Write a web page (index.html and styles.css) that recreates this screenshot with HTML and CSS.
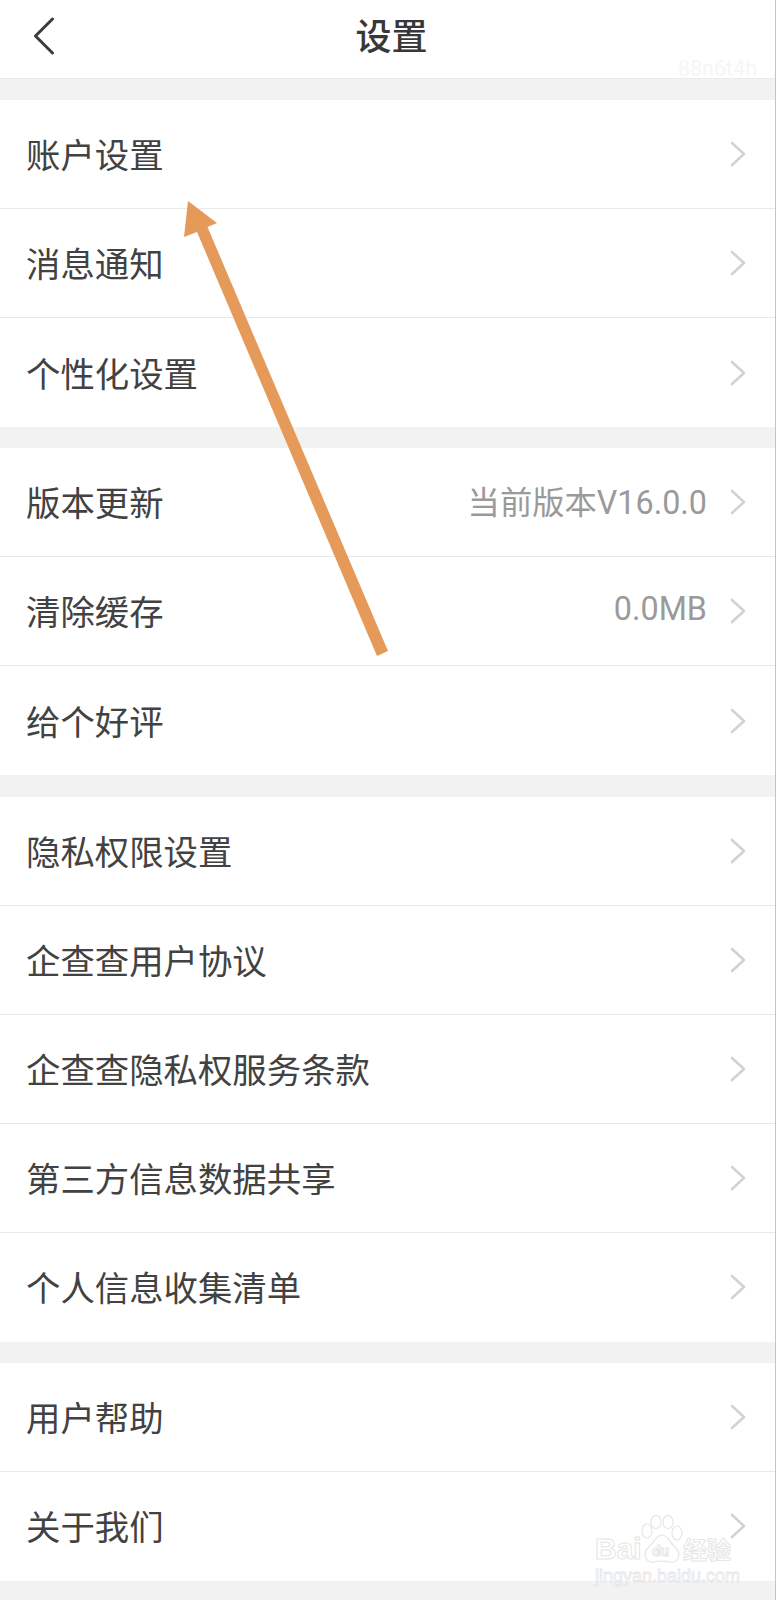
FILE: index.html
```html
<!DOCTYPE html>
<html lang="zh-CN">
<head>
    <meta charset="UTF-8">
    <meta name="viewport" content="width=device-width, initial-scale=1.0">
    <title>设置</title>
    <link rel="stylesheet" href="styles.css">
</head>
<body>
    <div class="page">
        <header class="topbar">
            <svg class="back" width="22" height="38" viewBox="0 0 22 38">
                <path d="M19.5 2 L2.5 19 L19.5 36" fill="none" stroke="#3c3c3c" stroke-width="3" stroke-linecap="round" stroke-linejoin="round"/>
            </svg>
            <h1>设置</h1>
            <span class="mark">88n6t4h</span>
        </header>

        <section class="group">
            <div class="row"><span>账户设置</span><svg class="chev" width="16" height="26" viewBox="0 0 16 26"><path d="M2 2 L14 13 L2 24"/></svg></div>
            <div class="row"><span>消息通知</span><svg class="chev" width="16" height="26" viewBox="0 0 16 26"><path d="M2 2 L14 13 L2 24"/></svg></div>
            <div class="row"><span>个性化设置</span><svg class="chev" width="16" height="26" viewBox="0 0 16 26"><path d="M2 2 L14 13 L2 24"/></svg></div>
        </section>

        <section class="group">
            <div class="row"><span>版本更新</span><em>当前版本V16.0.0</em><svg class="chev" width="16" height="26" viewBox="0 0 16 26"><path d="M2 2 L14 13 L2 24"/></svg></div>
            <div class="row"><span>清除缓存</span><em>0.0MB</em><svg class="chev" width="16" height="26" viewBox="0 0 16 26"><path d="M2 2 L14 13 L2 24"/></svg></div>
            <div class="row"><span>给个好评</span><svg class="chev" width="16" height="26" viewBox="0 0 16 26"><path d="M2 2 L14 13 L2 24"/></svg></div>
        </section>

        <section class="group">
            <div class="row"><span>隐私权限设置</span><svg class="chev" width="16" height="26" viewBox="0 0 16 26"><path d="M2 2 L14 13 L2 24"/></svg></div>
            <div class="row"><span>企查查用户协议</span><svg class="chev" width="16" height="26" viewBox="0 0 16 26"><path d="M2 2 L14 13 L2 24"/></svg></div>
            <div class="row"><span>企查查隐私权服务条款</span><svg class="chev" width="16" height="26" viewBox="0 0 16 26"><path d="M2 2 L14 13 L2 24"/></svg></div>
            <div class="row"><span>第三方信息数据共享</span><svg class="chev" width="16" height="26" viewBox="0 0 16 26"><path d="M2 2 L14 13 L2 24"/></svg></div>
            <div class="row"><span>个人信息收集清单</span><svg class="chev" width="16" height="26" viewBox="0 0 16 26"><path d="M2 2 L14 13 L2 24"/></svg></div>
        </section>

        <section class="group">
            <div class="row"><span>用户帮助</span><svg class="chev" width="16" height="26" viewBox="0 0 16 26"><path d="M2 2 L14 13 L2 24"/></svg></div>
            <div class="row"><span>关于我们</span><svg class="chev" width="16" height="26" viewBox="0 0 16 26"><path d="M2 2 L14 13 L2 24"/></svg></div>
        </section>

        <!-- annotation arrow drawn over the screenshot -->
        <svg class="arrow" width="776" height="700" viewBox="0 0 776 700">
            <path d="M188 201 L217 223 L207.5 227 L388 651 L377 656 L197 232 L184 237 Z" fill="#e59a5a"/>
        </svg>

        <div class="baidu">
            <div class="baidu-top">
                <span class="baidu-word">Bai</span>
                <svg class="paw" width="42" height="50" viewBox="0 0 42 50">
                    <g fill="none" stroke="#e6e6e6" stroke-width="1.2">
                        <ellipse cx="6" cy="16" rx="5" ry="7"/>
                        <ellipse cx="15" cy="7" rx="5" ry="6.5"/>
                        <ellipse cx="27" cy="7" rx="5" ry="6.5"/>
                        <ellipse cx="36" cy="18" rx="5" ry="7"/>
                        <path d="M21 20 C15 20 13 28 8 32 C1 38 4 48 13 47 C18 46 24 46 29 47 C38 48 41 38 34 32 C29 28 27 20 21 20 Z"/>
                    </g>
                </svg>
                <span class="baidu-du">du</span>
                <span class="baidu-word baidu-cn">经验</span>
            </div>
            <div class="baidu-url">jingyan.baidu.com</div>
        </div>
    </div>
</body>
</html>
```

FILE: styles.css
```css
* {
    box-sizing: border-box;
}

html, body {
    margin: 0;
    padding: 0;
}

body {
    width: 776px;
    height: 1600px;
    overflow: hidden;
    background-color: #f2f2f2;
    font-family: "Roboto", "Noto Sans CJK SC", sans-serif;
}

.page {
    position: relative;
    height: 1600px;
    border-right: 1px solid #c4c4c4;
}

.topbar {
    position: relative;
    height: 79px;
    display: flex;
    align-items: center;
    justify-content: center;
    background-color: #fff;
    border-bottom: 1px solid #ebebeb;
}

.topbar h1 {
    margin: 0 0 11px 8px;
    font-size: 36px;
    font-weight: 500;
    color: #383838;
}

.back {
    position: absolute;
    left: 33px;
    top: 17px;
}

.mark {
    position: absolute;
    right: 18px;
    top: 56px;
    font-size: 21.5px;
    color: #f6f6f6;
}

.group {
    margin-top: 21.2px;
    background-color: #fff;
}

.row {
    height: 109px;
    display: flex;
    align-items: center;
    padding: 0 29px 0 26px;
    border-bottom: 1px solid #e9e9e9;
    font-size: 34.4px;
    color: #424242;
}

.row:last-child {
    border-bottom: none;
}

.row span {
    margin-bottom: 2px;
}

.row em {
    margin-left: auto;
    margin-bottom: 4px;
    font-style: normal;
    font-size: 32.3px;
    color: #9a9a9a;
}

.chev {
    margin-left: auto;
}

.row em + .chev {
    margin-left: 23px;
}

.chev path {
    fill: none;
    stroke: #d2d2d2;
    stroke-width: 2.6;
    stroke-linecap: round;
    stroke-linejoin: round;
}

.arrow {
    position: absolute;
    left: 0;
    top: 0;
}

/* faint watermark, bottom right */
.baidu {
    position: absolute;
    left: 595px;
    top: 1515px;
    width: 140px;
    color: transparent;
    -webkit-text-stroke: 1px #e6e6e6;
}

.baidu-top {
    position: relative;
    display: flex;
    align-items: flex-end;
    height: 50px;
}

.baidu-word {
    font-size: 30px;
    line-height: 32px;
    font-family: "Liberation Sans", sans-serif;
    font-weight: 700;
    width: 46px;
}

.baidu-cn {
    position: absolute;
    left: 88px;
    bottom: 0;
    width: auto;
    font-size: 24px;
    font-family: "Noto Sans CJK SC", sans-serif;
}

.paw {
    flex-shrink: 0;
}

.baidu-du {
    position: absolute;
    left: 57px;
    bottom: 5px;
    font-size: 15px;
    font-weight: 700;
}

.baidu-url {
    font-size: 18px;
    line-height: 22px;
    margin-top: 0;
    white-space: nowrap;
    font-family: "Liberation Sans", sans-serif;
    -webkit-text-stroke-width: 0.8px;
}
```
